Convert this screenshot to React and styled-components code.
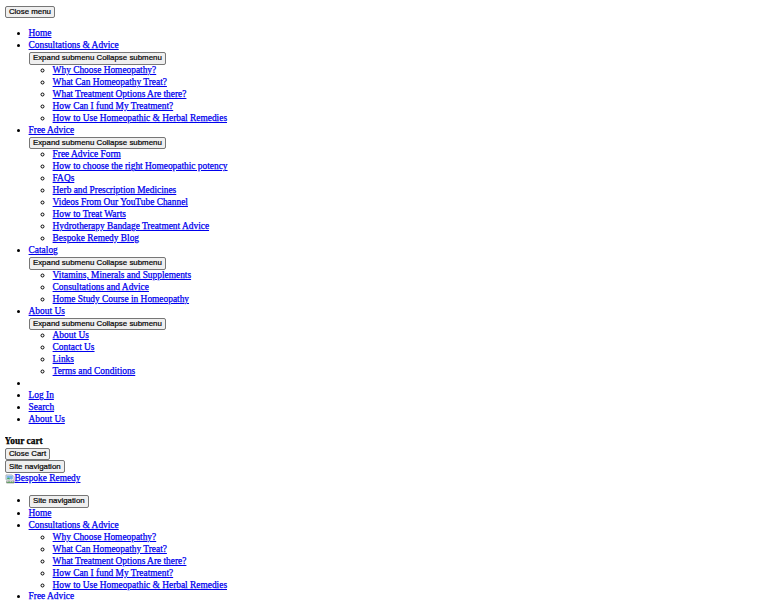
import React from 'react'
import styled, { createGlobalStyle } from 'styled-components'

const GlobalStyle = createGlobalStyle`
  body {
    margin: 5.6px 4.6px;
    background: #fff;
    color: #000;
    font-family: 'Liberation Serif', 'Times New Roman', serif;
    font-size: 9.4px;
    line-height: 11.95px;
    -webkit-text-stroke: 0.25px currentColor;
  }
`

const PlainButton = styled.button`
  display: block;
  margin: 0;
  padding: 1.2px 3.3px 0.8px;
  font-family: 'Liberation Sans', Arial, sans-serif;
  font-size: 7.9px;
  line-height: 8.8px;
  color: #000;
  background: #efefef;
  border: 1px solid #767676;
  border-radius: 2px;
  -webkit-text-stroke: 0.2px #000;
`

const NavList = styled.ul`
  margin: 9.8px 0;
  padding-left: 24px;
  list-style: disc;
`

const SubList = styled.ul`
  margin: 0;
  padding-left: 24px;
  list-style: circle;
`

const Item = styled.li`
  min-height: 11.95px;
`

const NavLink = styled.a`
  color: #0000ee;
  text-decoration: underline;
`

const CartTitle = styled.div`
  font-weight: bold;
`

const LogoLink = styled.a`
  display: flex;
  align-items: center;
  color: #0000ee;
  text-decoration: underline;
  width: max-content;
`

const BrokenIcon = () => (
  <svg width="10" height="10" viewBox="0 0 16 16">
    <path d="M1.5 1.5h10l3 3v5l-2 1.5-2-1.5-2 1.5-2-1.5-2 1.5-3-2z" fill="#fff" stroke="#8a8a8a" />
    <rect x="2.5" y="2.5" width="10" height="6" fill="#7ab3e8" />
    <path d="M2.5 14.5h12v-3l-2 1.5-2-1.5-2 1.5-2-1.5-2 1.5-2-1.5z" fill="#4caf50" stroke="#8a8a8a" />
    <path d="M2.5 8.5l3-3 3 3z" fill="#4caf50" />
  </svg>
)

const menu = [
  { label: 'Home' },
  {
    label: 'Consultations & Advice',
    children: [
      'Why Choose Homeopathy?',
      'What Can Homeopathy Treat?',
      'What Treatment Options Are there?',
      'How Can I fund My Treatment?',
      'How to Use Homeopathic & Herbal Remedies',
    ],
  },
  {
    label: 'Free Advice',
    children: [
      'Free Advice Form',
      'How to choose the right Homeopathic potency',
      'FAQs',
      'Herb and Prescription Medicines',
      'Videos From Our YouTube Channel',
      'How to Treat Warts',
      'Hydrotherapy Bandage Treatment Advice',
      'Bespoke Remedy Blog',
    ],
  },
  {
    label: 'Catalog',
    children: [
      'Vitamins, Minerals and Supplements',
      'Consultations and Advice',
      'Home Study Course in Homeopathy',
    ],
  },
  {
    label: 'About Us',
    children: ['About Us', 'Contact Us', 'Links', 'Terms and Conditions'],
  },
]

function MenuItems({ withToggles }) {
  return menu.map((item) => (
    <Item key={item.label}>
      <NavLink href="#">{item.label}</NavLink>
      {item.children && withToggles && <PlainButton>Expand submenu Collapse submenu</PlainButton>}
      {item.children && (
        <SubList>
          {item.children.map((child) => (
            <Item key={child}>
              <NavLink href="#">{child}</NavLink>
            </Item>
          ))}
        </SubList>
      )}
    </Item>
  ))
}

export default function App() {
  return (
    <>
      <GlobalStyle />
      <PlainButton>Close menu</PlainButton>
      <NavList>
        <MenuItems withToggles />
        <Item />
        <Item><NavLink href="#">Log In</NavLink></Item>
        <Item><NavLink href="#">Search</NavLink></Item>
        <Item><NavLink href="#">About Us</NavLink></Item>
      </NavList>
      <CartTitle>Your cart</CartTitle>
      <PlainButton>Close Cart</PlainButton>
      <PlainButton>Site navigation</PlainButton>
      <LogoLink href="#">
        <BrokenIcon />
        Bespoke Remedy
      </LogoLink>
      <NavList>
        <Item><PlainButton>Site navigation</PlainButton></Item>
        <MenuItems />
        <Item><NavLink href="#">Log In</NavLink></Item>
        <Item><NavLink href="#">Search</NavLink></Item>
      </NavList>
    </>
  )
}
